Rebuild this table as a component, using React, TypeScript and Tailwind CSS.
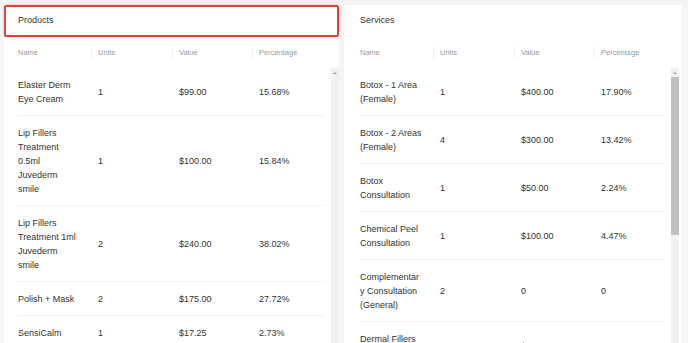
import React from "react";

type Row = { name: string; units: string; value: string; pct: string };

const products: Row[] = [
  { name: "Elaster Derm Eye Cream", units: "1", value: "$99.00", pct: "15.68%" },
  { name: "Lip Fillers Treatment 0.5ml Juvederm smile", units: "1", value: "$100.00", pct: "15.84%" },
  { name: "Lip Fillers Treatment 1ml Juvederm smile", units: "2", value: "$240.00", pct: "38.02%" },
  { name: "Polish + Mask", units: "2", value: "$175.00", pct: "27.72%" },
  { name: "SensiCalm", units: "1", value: "$17.25", pct: "2.73%" },
];

const services: Row[] = [
  { name: "Botox - 1 Area (Female)", units: "1", value: "$400.00", pct: "17.90%" },
  { name: "Botox - 2 Areas (Female)", units: "4", value: "$300.00", pct: "13.42%" },
  { name: "Botox Consultation", units: "1", value: "$50.00", pct: "2.24%" },
  { name: "Chemical Peel Consultation", units: "1", value: "$100.00", pct: "4.47%" },
  { name: "Complementary Consultation (General)", units: "2", value: "0", pct: "0" },
  { name: "Dermal Fillers 1ml", units: "1", value: "$360.00", pct: "16.11%" },
];

const HeadCell = ({ label, last }: { label: string; last?: boolean }) => (
  <div className="flex items-center justify-between pr-[6px]">
    <span>{label}</span>
    {!last && <span className="w-px h-[12px] bg-[#f0f0f0]"></span>}
  </div>
);

const Panel = ({
  title,
  rows,
  highlight,
  thumb,
}: {
  title: string;
  rows: Row[];
  highlight?: boolean;
  thumb?: boolean;
}) => {
  return (
    <div className="flex flex-col bg-white h-full">
      <div
        className={
          highlight
            ? "h-[32px] shrink-0 flex items-center pl-[12px] border-2 border-[#d8453b] rounded-[2px] shadow-[0_0_3px_rgba(216,69,59,0.35)] text-[#333]"
            : "h-[32px] shrink-0 flex items-center pl-[16px] text-[#333]"
        }
      >
        {title}
      </div>
      <div className={highlight ? "flex-1 flex flex-col pl-[14px]" : "flex-1 flex flex-col pl-[16px]"}>
        <div className="h-[31px] shrink-0 grid grid-cols-[80px_81px_80px_1fr] items-center text-[7.5px] text-[#9a9a9a]">
          <HeadCell label="Name" />
          <HeadCell label="Units" />
          <HeadCell label="Value" />
          <HeadCell label="Percentage" last />
        </div>
        <div className="flex-1 flex min-h-0 overflow-hidden">
          <div className="flex-1 flex flex-col">
            {rows.map((r) => (
              <div
                key={r.name}
                className="grid grid-cols-[80px_81px_80px_1fr] items-center py-[9.5px] leading-[14px] border-b border-[#f3f3f3] mr-[6px] text-[#333]"
              >
                <div className="w-[63px] break-words">{r.name}</div>
                <div>{r.units}</div>
                <div>{r.value}</div>
                <div>{r.pct}</div>
              </div>
            ))}
          </div>
          <div className="w-[8px] shrink-0 bg-[#f1f1f1] flex flex-col items-center">
            <div className="h-[9px] flex items-center justify-center">
              <div className="w-0 h-0 border-l-[2px] border-r-[2px] border-b-[2px] border-l-transparent border-r-transparent border-b-[#a3a3a3]"></div>
            </div>
            {thumb && <div className="w-[8px] h-[158px] bg-[#c1c1c1]"></div>}
          </div>
        </div>
      </div>
    </div>
  );
};

export default function App() {
  return (
    <div
      className="w-[688px] h-[343px] overflow-hidden bg-[#f5f5f5] flex gap-[5px] pl-[4px] pt-[5px] text-[9px]"
      style={{ fontFamily: '"Liberation Sans", Arial, sans-serif' }}
    >
      <div className="w-[335px] h-[360px]">
        <Panel title="Products" rows={products} highlight />
      </div>
      <div className="w-[338px] h-[360px] pr-[3px] bg-white">
        <Panel title="Services" rows={services} thumb />
      </div>
    </div>
  );
}
